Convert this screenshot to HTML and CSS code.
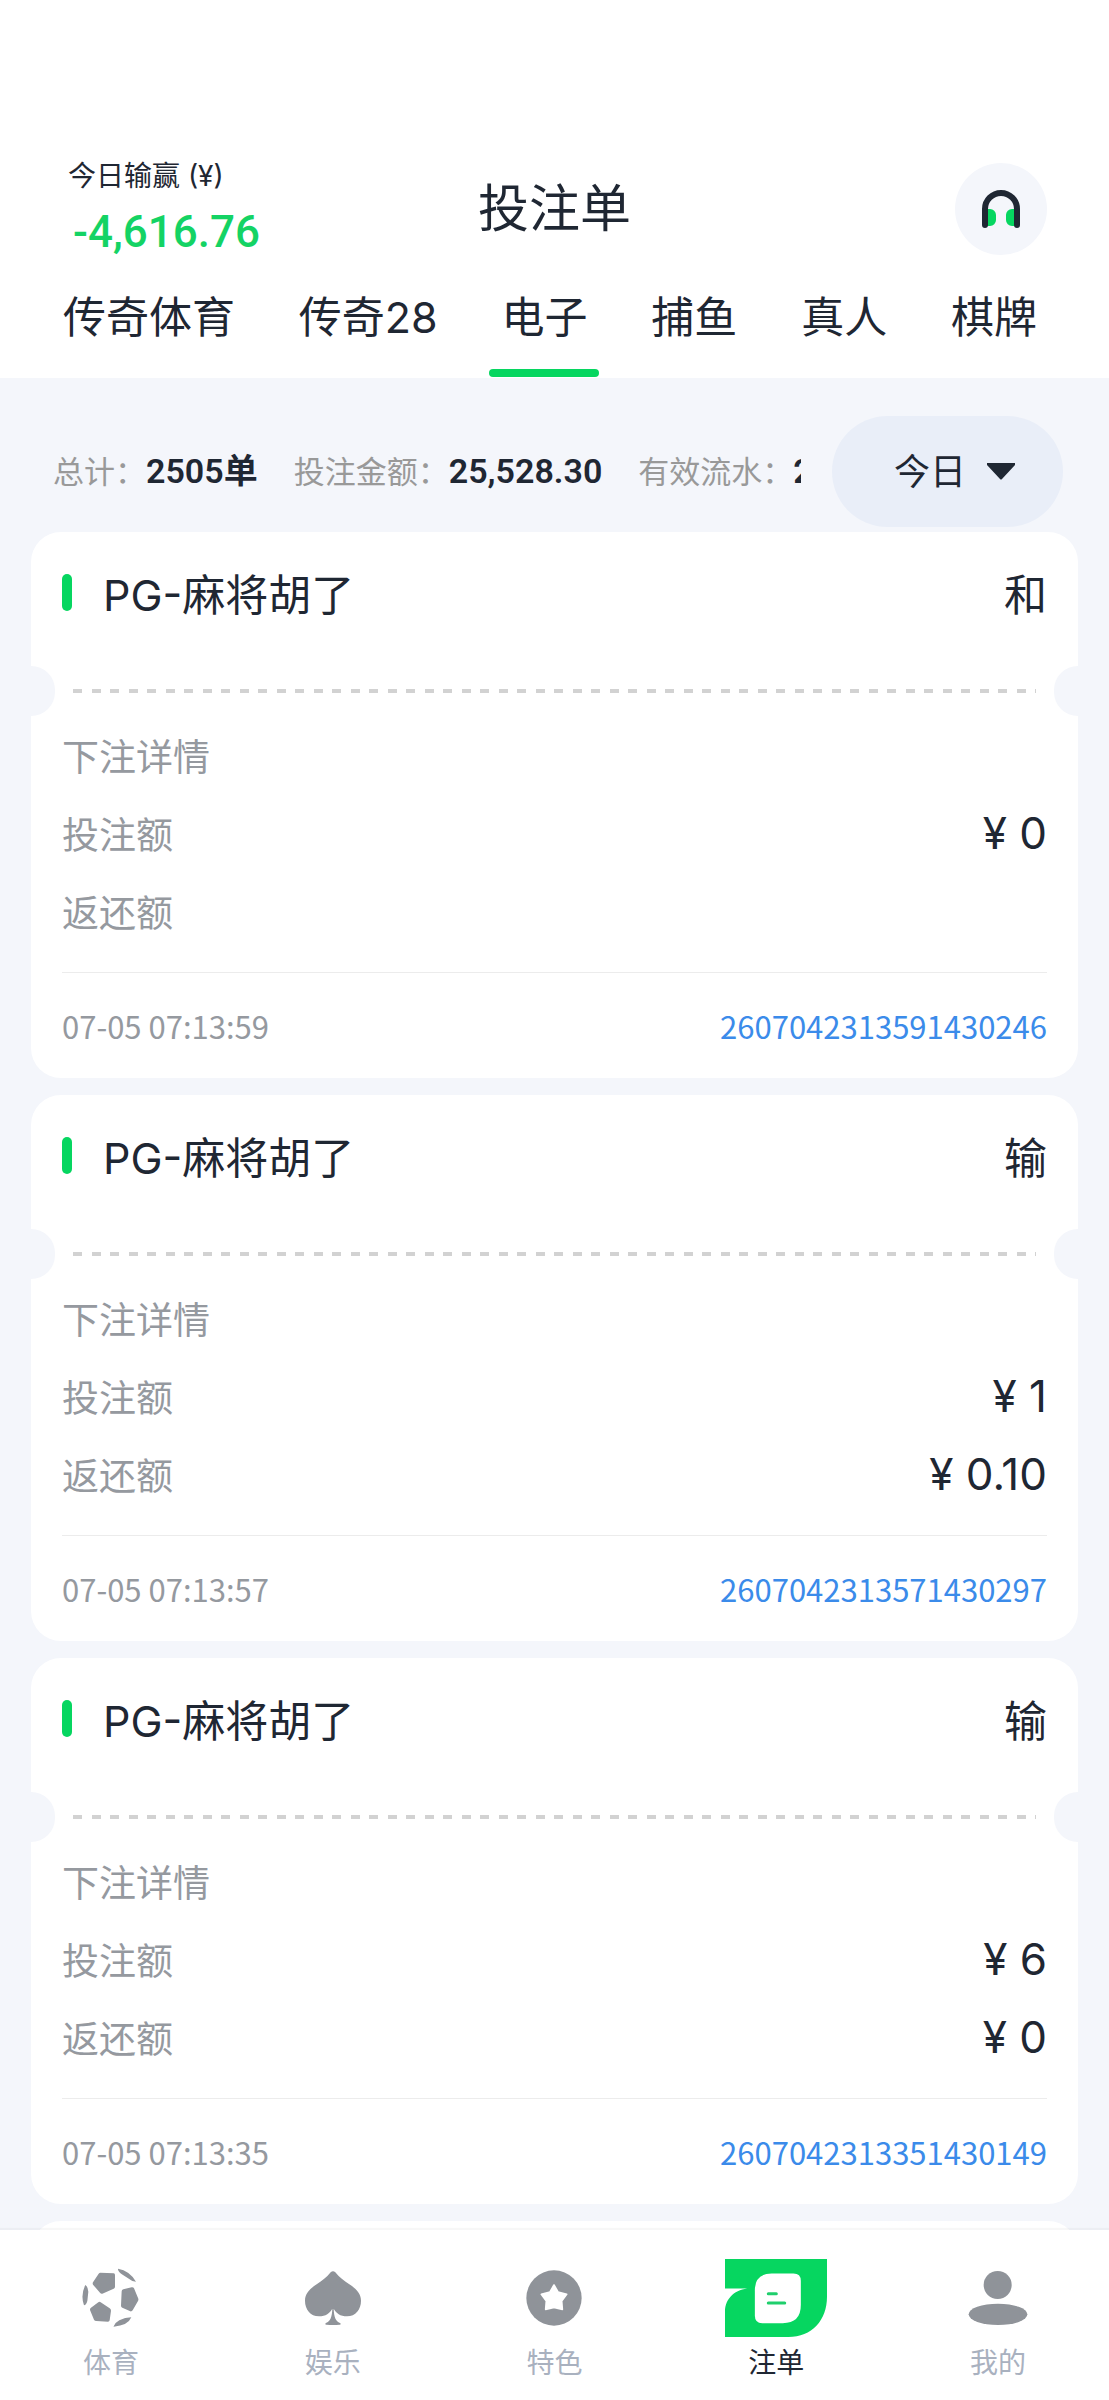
FILE: index.html
```
<!DOCTYPE html>
<html lang="zh-CN">
<head>
    <meta charset="UTF-8">
    <meta name="viewport" content="width=device-width, initial-scale=1.0">
    <title>投注单</title>
    <link rel="stylesheet" href="styles.css">
</head>
<body>
    <!-- 顶部 -->
    <header class="header">
        <div class="header-top">
            <div class="today">
                <div class="today-label">今日输赢 (¥)</div>
                <div class="today-value">-4,616.76</div>
            </div>
            <h1 class="title">投注单</h1>
            <button class="service" aria-label="客服">
                <svg width="40" height="40" viewBox="0 0 40 40" fill="none">
                    <path d="M5 20h4a6 6 0 0 1 6 6v5a6 6 0 0 1-6 6H5zM35 20h-4a6 6 0 0 0-6 6v5a6 6 0 0 0 6 6h4z" fill="#06d660"/>
                    <path d="M4 36V20a16 16 0 0 1 32 0v16" stroke="#1f2733" stroke-width="6" stroke-linecap="round"/>
                </svg>
            </button>
        </div>
        <nav class="tabs">
            <a href="#" class="tab">传奇体育</a>
            <a href="#" class="tab">传奇28</a>
            <a href="#" class="tab active">电子</a>
            <a href="#" class="tab">捕鱼</a>
            <a href="#" class="tab">真人</a>
            <a href="#" class="tab">棋牌</a>
        </nav>
    </header>

    <main class="content">
        <!-- 汇总 -->
        <div class="summary">
            <div class="summary-scroll">
                <div class="stat">总计：<b>2505单</b></div>
                <div class="stat">投注金额：<b>25,528.30</b></div>
                <div class="stat">有效流水：<b>25,528.30</b></div>
            </div>
            <label class="period">
                <select aria-label="日期">
                    <option>今日</option>
                    <option>昨日</option>
                </select>
                <svg width="28" height="17" viewBox="0 0 28 17"><path d="M1 0h26a1 1 0 0 1 1 2L15 16q-1 1-2 0L0 2a1 1 0 0 1 1-2z" fill="#1f2733"/></svg>
            </label>
        </div>

        <!-- 注单列表 -->
        <div class="list">
            <article class="card">
                <div class="card-head">
                    <h2>PG-麻将胡了</h2>
                    <span>和</span>
                </div>
                <div class="tear"></div>
                <div class="card-body">
                    <div class="row">下注详情</div>
                    <div class="row">投注额<span class="amount">¥ 0</span></div>
                    <div class="row">返还额</div>
                </div>
                <div class="card-foot">
                    <time>07-05 07:13:59</time>
                    <a href="#">2607042313591430246</a>
                </div>
            </article>

            <article class="card">
                <div class="card-head">
                    <h2>PG-麻将胡了</h2>
                    <span>输</span>
                </div>
                <div class="tear"></div>
                <div class="card-body">
                    <div class="row">下注详情</div>
                    <div class="row">投注额<span class="amount">¥ 1</span></div>
                    <div class="row">返还额<span class="amount">¥ 0.10</span></div>
                </div>
                <div class="card-foot">
                    <time>07-05 07:13:57</time>
                    <a href="#">2607042313571430297</a>
                </div>
            </article>

            <article class="card">
                <div class="card-head">
                    <h2>PG-麻将胡了</h2>
                    <span>输</span>
                </div>
                <div class="tear"></div>
                <div class="card-body">
                    <div class="row">下注详情</div>
                    <div class="row">投注额<span class="amount">¥ 6</span></div>
                    <div class="row">返还额<span class="amount">¥ 0</span></div>
                </div>
                <div class="card-foot">
                    <time>07-05 07:13:35</time>
                    <a href="#">2607042313351430149</a>
                </div>
            </article>

            <article class="card"></article>
        </div>
    </main>

    <!-- 底部导航 -->
    <nav class="tabbar">
        <a href="#" class="tabbar-item">
            <span class="icon">
                <svg width="58" height="60" viewBox="241 265 174 180" fill="#8f9399">
                    <path d="M296 279l40 2q4 0 4 5v35q0 4-4 6l-34 15q-4 1-7-3l-21-24q-2-4 0-7l17-26q2-3 5-3z"/>
                    <path d="M365 329l25-6q5-1 7 3l13 31q1 4-1 7l-16 28q-3 4-7 3l-24-11q-4-2-4-6l2-43q0-5 5-6z"/>
                    <path d="M268 384l22-16q4-3 7 0l27 18q4 3 4 7l-4 29q-1 4-5 4l-35-2q-5 0-7-4l-12-29q-1-4 3-7z"/>
                    <path d="M349 267q35 6 54 39l-11-2-28-18q-16-9-15-19zM251 316q8 5 9 20l-3 28q-4 13-10 13-11-31 4-61zM336 440q4-11 17-18 17-9 36-9-10 25-53 28z"/>
                </svg>
            </span>
            体育
        </a>
        <a href="#" class="tabbar-item">
            <span class="icon">
                <svg width="56" height="54" viewBox="912 275 168 162" fill="#8f9399">
                    <path d="M989 279q7-7 14 0c13 16 27 26 42 36 20 13 35 27 35 49 0 26-16 47-42 47-20 0-33-10-40-23 1 25 6 38 19 43 4 3 2 5-2 5q-19 2-38 0c-4 0-6-2-2-5 13-5 18-18 19-43-7 13-20 23-40 23-26 0-42-21-42-47 0-22 15-36 35-49 15-10 29-20 42-36z"/>
                </svg>
            </span>
            娱乐
        </a>
        <a href="#" class="tabbar-item">
            <span class="icon">
                <svg width="56" height="56" viewBox="377 269 168 168">
                    <circle cx="461" cy="353" r="83" fill="#8f9399"/>
                    <path d="M461 314l12 21 26 7-15 20 2 25-25-6-25 6 2-25-15-20 26-7z" fill="#fff" stroke="#fff" stroke-width="5" stroke-linejoin="round"/>
                </svg>
            </span>
            特色
        </a>
        <a href="#" class="tabbar-item active">
            <span class="icon">
                <svg width="102" height="78" viewBox="76 238 304 232">
                    <path d="M76 238H380V350C380 420 335 470 265 470H76V395C76 355 108 326 150 326H76Z" fill="#06d660"/>
                    <path d="M215 281H280Q302 281 302 303V375Q302 429 248 429H187Q165 429 165 407V331Q165 281 215 281Z" fill="#fff"/>
                    <path d="M205 341H229M205 369H254" stroke="#1fcf6c" stroke-width="9" stroke-linecap="round"/>
                </svg>
            </span>
            注单
        </a>
        <a href="#" class="tabbar-item">
            <span class="icon">
                <svg width="60" height="54" viewBox="802 275 180 162" fill="#8f9399">
                    <circle cx="891" cy="317" r="42"/>
                    <ellipse cx="892" cy="405" rx="88" ry="32"/>
                </svg>
            </span>
            我的
        </a>
    </nav>
</body>
</html>
```
FILE: styles.css
```
* {
    box-sizing: border-box;
}
body {
    margin: 0;
    height: 100vh;
    display: flex;
    flex-direction: column;
    font-family: Inter, 'Noto Sans CJK SC', sans-serif;
    color: #1f2733;
    background-color: #f4f6fb;
}
a {
    color: inherit;
    text-decoration: none;
}
h1, h2 {
    margin: 0;
    font-weight: 400;
}

/* 顶部 */
.header {
    background-color: #fff;
    padding-top: 155px;
}
.header-top {
    display: grid;
    grid-template-columns: 1fr auto 1fr;
    align-items: center;
    padding: 0 62px;
}
.today {
    padding-left: 6px;
}
.today-label {
    font-size: 28px;
    line-height: 42px;
}
.today-value {
    margin-top: 5px;
    padding-left: 5px;
    font-family: Roboto, sans-serif;
    font-size: 44px;
    font-weight: 500;
    line-height: 60px;
    color: #14d364;
}
.title {
    font-size: 51px;
    line-height: 64px;
}
.service {
    display: flex;
    align-items: center;
    justify-content: center;
    justify-self: end;
    width: 92px;
    height: 92px;
    padding: 0;
    border: none;
    border-radius: 50%;
    background-color: #f4f6fb;
}
.tabs {
    display: flex;
    justify-content: space-between;
    padding: 0 72px 0 63px;
}
.tab {
    position: relative;
    padding: 23px 0 29px;
    font-size: 43px;
    line-height: 64px;
}
.tab.active::after {
    content: "";
    position: absolute;
    left: 50%;
    bottom: 1px;
    width: 110px;
    height: 8px;
    margin-left: -55px;
    border-radius: 4px;
    background-color: #06d660;
}

/* 汇总 */
.content {
    flex: 1;
    min-height: 0;
    overflow-y: auto;
    scrollbar-width: none;
}
.summary {
    display: flex;
    align-items: center;
    gap: 31px;
    padding: 38px 46px 5px 53px;
}
.summary-scroll {
    flex: 1;
    display: flex;
    gap: 36px;
    overflow: hidden;
    white-space: nowrap;
}
.stat {
    flex: none;
    font-size: 31px;
    line-height: 48px;
    color: #999;
}
.stat b {
    font-family: Roboto, 'Noto Sans CJK SC', sans-serif;
    font-size: 34px;
    font-weight: 600;
    color: #1f2733;
}
.period {
    display: flex;
    align-items: center;
    gap: 20px;
    height: 111px;
    padding: 0 48px 0 62px;
    border-radius: 56px;
    background-color: #e9eef8;
}
.period select {
    appearance: none;
    padding: 0;
    border: none;
    background: none;
    font: inherit;
    font-size: 36px;
    color: inherit;
}

/* 注单卡片 */
.list {
    display: flex;
    flex-direction: column;
    gap: 17px;
    padding: 0 31px 17px;
}
.card {
    flex: none;
    min-height: 546px;
    border-radius: 30px;
    background-color: #fff;
}
.card-head {
    display: flex;
    justify-content: space-between;
    align-items: center;
    height: 120px;
    padding: 0 31px;
    font-size: 43px;
}
.card-head h2 {
    display: flex;
    align-items: center;
    gap: 31px;
    font-size: 43px;
}
.card-head h2::before {
    content: "";
    width: 10px;
    height: 37px;
    border-radius: 5px;
    background-color: #06d660;
}
.tear {
    display: flex;
    align-items: center;
    justify-content: space-between;
    height: 50px;
    margin-top: 14px;
    background: repeating-linear-gradient(90deg, #d2d2d2 0 9px, transparent 9px 19px, #d2d2d2 19px 28px, transparent 28px 37px) center / calc(100% - 84px) 4px no-repeat;
}
.tear::before,
.tear::after {
    content: "";
    width: 24px;
    height: 50px;
    border-radius: 0 25px 25px 0;
    background-color: #f4f6fb;
}
.tear::after {
    border-radius: 25px 0 0 25px;
}
.card-body {
    margin: 0 31px;
    padding-bottom: 22px;
    border-bottom: 1px solid #ececec;
}
.row {
    display: flex;
    justify-content: space-between;
    align-items: center;
    height: 78px;
    font-size: 37px;
    color: #95999f;
}
.amount {
    font-size: 44px;
    color: #1f2733;
}
.card-foot {
    display: flex;
    justify-content: space-between;
    align-items: center;
    height: 105px;
    padding: 0 31px;
    font-family: 'Noto Sans CJK SC', sans-serif;
    font-size: 31px;
    color: #95999f;
}
.card-foot a {
    color: #3b8bea;
}

/* 底部导航 */
.tabbar {
    display: flex;
    padding: 29px 0 17px;
    background-color: #fff;
    box-shadow: 0 -2px 1px rgba(0, 0, 0, 0.03);
    z-index: 1;
}
.tabbar-item {
    flex: 1;
    display: flex;
    flex-direction: column;
    align-items: center;
    gap: 6px;
    font-size: 28px;
    line-height: 40px;
    color: #a9b1bf;
}
.tabbar-item.active {
    color: #1f2733;
}
.icon {
    display: flex;
    align-items: center;
    justify-content: center;
    height: 78px;
}
```
